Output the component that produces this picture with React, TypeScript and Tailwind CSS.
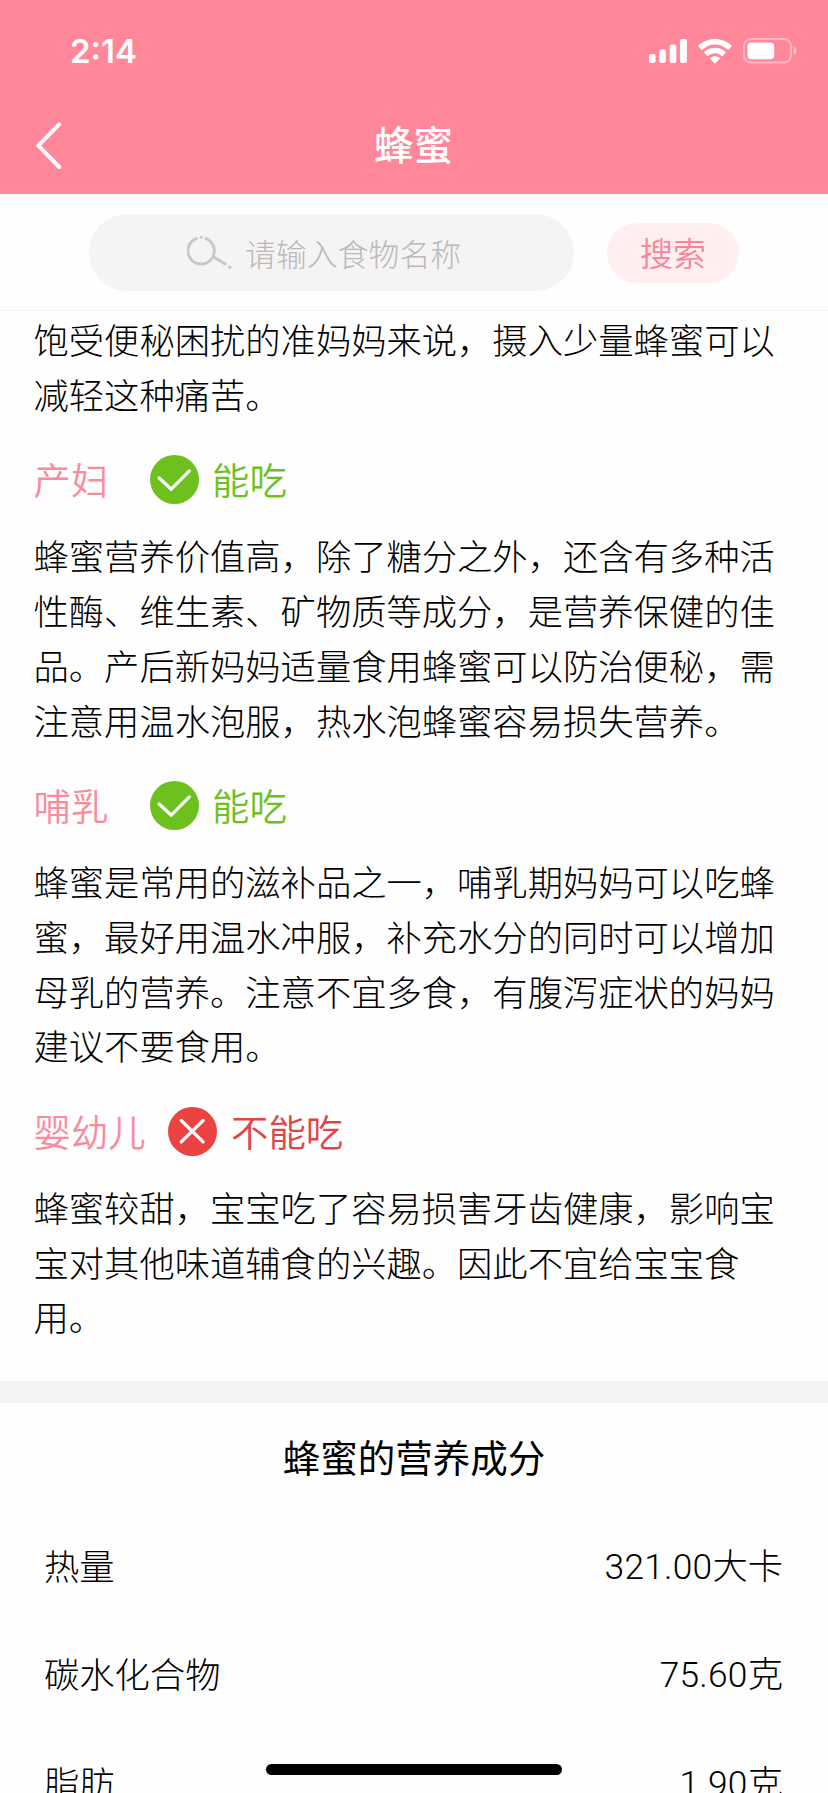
import * as React from "react";
import { cva, type VariantProps } from "class-variance-authority";
import { clsx } from "clsx";

// Status bar icons
const SignalIcon = () => (
  <svg viewBox="0 0 38 24" fill="currentColor" className="h-6 w-[38px]" aria-hidden="true">
    <rect x="0" y="15" width="6.6" height="9" rx="2" />
    <rect x="10.3" y="10.5" width="6.6" height="13.5" rx="2" />
    <rect x="20.7" y="5.5" width="6.6" height="18.5" rx="2" />
    <rect x="31" y="0" width="6.9" height="24" rx="2" />
  </svg>
);

const WifiIcon = () => (
  <svg viewBox="0 0 34 25" fill="currentColor" className="h-[25px] w-[34px]" aria-hidden="true">
    <path d="M17 0C23.3 0 29.2 2.4 33.3 6.3C33.8 6.8 33.8 7.3 33.4 7.8L30.8 10.4C30.4 10.8 29.9 10.8 29.4 10.4C26 7.3 21.7 5.4 17 5.4S8 7.3 4.6 10.4C4.1 10.8 3.6 10.8 3.2 10.4L.6 7.8C.2 7.3 .2 6.8 .7 6.3C4.8 2.4 10.7 0 17 0Z" />
    <path d="M17 8.7C21 8.7 24.7 10.2 27.5 12.7C28 13.1 28 13.7 27.5 14.1L24.9 16.7C24.5 17.1 24 17.1 23.5 16.7C21.7 15.1 19.4 14.2 17 14.2S12.3 15.1 10.5 16.7C10 17.1 9.5 17.1 9.1 16.7L6.5 14.1C6 13.7 6 13.1 6.5 12.7C9.3 10.2 13 8.7 17 8.7Z" />
    <path d="M17 17.2C18.7 17.2 20.3 17.8 21.5 18.8C22 19.2 22 19.7 21.6 20.1L17.7 24.1C17.2 24.5 16.8 24.5 16.3 24.1L12.4 20.1C12 19.7 12 19.2 12.5 18.8C13.7 17.8 15.3 17.2 17 17.2Z" />
  </svg>
);

const BatteryIcon = () => (
  <svg viewBox="0 0 54 26" fill="none" className="h-[26px] w-[54px]" aria-hidden="true">
    <rect x="1" y="1" width="47" height="23.6" rx="7" stroke="#fff" strokeOpacity=".4" strokeWidth="2" />
    <rect x="4.4" y="4.5" width="26.8" height="16.8" rx="4" fill="#fff" />
    <path d="M50.6 8.6C52.4 9.4 53.6 11 53.6 12.8S52.4 16.2 50.6 17Z" fill="#fff" fillOpacity=".45" />
  </svg>
);

const BackIcon = () => (
  <svg
    viewBox="0 0 26 48"
    fill="none"
    stroke="currentColor"
    strokeWidth="4"
    strokeLinecap="round"
    strokeLinejoin="round"
    className="ml-9 h-12 w-[26px]"
    aria-hidden="true"
  >
    <polyline points="23.2 2.4 2.4 23.6 23.2 45" />
  </svg>
);

const SearchIcon = () => (
  <svg
    viewBox="0 0 46 36"
    fill="none"
    stroke="#c8c8c8"
    strokeWidth="2.9"
    strokeLinecap="round"
    className="h-9 w-[46px]"
    aria-hidden="true"
  >
    <path d="M9.2 3.6A13.2 13.2 0 1 0 19 3.6" />
    <path d="M26.3 21.8L38.2 29" />
    <circle cx="14.1" cy="2.2" r="1.5" fill="#c8c8c8" stroke="none" />
    <circle cx="42.8" cy="32.2" r="1.7" fill="#c8c8c8" stroke="none" />
  </svg>
);

const CheckBadge = () => (
  <svg viewBox="0 0 48 48" fill="none" className="h-[49px] w-[49px]" aria-hidden="true">
    <circle cx="24" cy="24" r="24" fill="#6cc11e" />
    <polyline
      points="9 22.5 20.8 33.5 38.6 15.6"
      stroke="#fff"
      strokeWidth="3.2"
      strokeLinecap="round"
      strokeLinejoin="round"
    />
  </svg>
);

const CrossBadge = () => (
  <svg viewBox="0 0 48 48" fill="none" className="h-[49px] w-[49px]" aria-hidden="true">
    <circle cx="24" cy="24" r="24" fill="#eb4242" />
    <path d="M13 13.2L34.4 34.2M34.4 13.2L13 34.2" stroke="#fff" strokeWidth="3.2" strokeLinecap="round" />
  </svg>
);

const verdictVariants = cva("flex h-[106.6px] items-center pt-2.5 text-[37.4px] leading-[52px] font-[350]", {
  variants: {
    verdict: {
      yes: "text-[#6cc11e]",
      no: "text-[#e04444]",
    },
  },
  defaultVariants: {
    verdict: "yes",
  },
});

interface AdviceProps extends VariantProps<typeof verdictVariants> {
  group: string;
  children: string;
}

/** Eating advice for one group of people */
const Advice = ({ group, verdict = "yes", children }: AdviceProps) => (
  <section>
    <h2 className={verdictVariants({ verdict })}>
      <span className={clsx("pb-px text-[#fb8b9c]", verdict === "yes" ? "w-[116.5px]" : "w-[134.5px]")}>{group}</span>
      {verdict === "yes" ? <CheckBadge /> : <CrossBadge />}
      <span className={clsx("pb-px", verdict === "yes" ? "ml-[13px]" : "ml-3.5")}>
        {verdict === "yes" ? "能吃" : "不能吃"}
      </span>
    </h2>
    <p className="leading-[54.8px]">{children}</p>
  </section>
);

const nutrients = [
  { name: "热量", amount: "321.00", unit: "大卡" },
  { name: "碳水化合物", amount: "75.60", unit: "克" },
  { name: "脂肪", amount: "1.90", unit: "克" },
];

export default function App() {
  return (
    <div
      lang="zh-CN"
      className="relative flex h-[1793px] w-[828px] flex-col overflow-hidden bg-[#fefefe] font-['Noto_Sans_CJK_SC',sans-serif] text-[35.3px] font-light text-black"
    >
      <header className="h-[194px] shrink-0 bg-[#ff8799] text-white">
        <div className="flex h-[102px] items-center justify-between pr-[31px] pl-[70px]">
          <span className="pt-px font-['Inter',sans-serif] text-[33px] font-semibold">2:14</span>
          <div className="flex items-center gap-[11px]">
            <SignalIcon />
            <WifiIcon />
            <BatteryIcon />
          </div>
        </div>
        <div className="grid h-[88px] grid-cols-[1fr_auto_1fr] items-center">
          <BackIcon />
          <h1 className="pr-px pb-[7px] text-[39.5px] leading-none font-medium">蜂蜜</h1>
        </div>
      </header>

      <div className="flex h-[117px] shrink-0 items-center border-b border-[#f2f2f2] pt-px pl-[88.5px]">
        <div className="flex h-[77px] w-[485.5px] items-center rounded-full bg-[#f5f3f4] pl-[98.5px] text-[30.9px] text-[#b9b9bb]">
          <SearchIcon />
          <span className="ml-3 pt-0.5">请输入食物名称</span>
        </div>
        <button className="ml-[33px] h-[60px] w-[132px] rounded-full bg-[#ffeff0] text-[33px] font-[350] text-[#fb8496]">
          搜索
        </button>
      </div>

      <main className="h-[1070px] shrink-0 pt-px pr-[50.5px] pl-[33.5px]">
        <p className="leading-[54.8px]">饱受便秘困扰的准妈妈来说，摄入少量蜂蜜可以减轻这种痛苦。</p>
        <Advice group="产妇">
          蜂蜜营养价值高，除了糖分之外，还含有多种活性酶、维生素、矿物质等成分，是营养保健的佳品。产后新妈妈适量食用蜂蜜可以防治便秘，需注意用温水泡服，热水泡蜂蜜容易损失营养。
        </Advice>
        <Advice group="哺乳">
          蜂蜜是常用的滋补品之一，哺乳期妈妈可以吃蜂蜜，最好用温水冲服，补充水分的同时可以增加母乳的营养。注意不宜多食，有腹泻症状的妈妈建议不要食用。
        </Advice>
        <Advice group="婴幼儿" verdict="no">
          蜂蜜较甜，宝宝吃了容易损害牙齿健康，影响宝宝对其他味道辅食的兴趣。因此不宜给宝宝食用。
        </Advice>
      </main>

      <section className="shrink-0 border-t-[22px] border-[#f5f3f4]">
        <h2 className="flex h-[108px] items-center justify-center pb-px text-[37.5px] font-normal">
          蜂蜜的营养成分
        </h2>
        <ul className="pr-[45px] pl-[44px]">
          {nutrients.map(({ name, amount, unit }) => (
            <li key={name} className="flex h-[108.5px] items-center justify-between">
              <span>{name}</span>
              <span className="pt-px">
                <span className="font-['Roboto',sans-serif] tracking-[0.25px]">{amount}</span>
                {unit}
              </span>
            </li>
          ))}
        </ul>
      </section>

      {/* Home indicator */}
      <div className="absolute top-[1764px] left-[266px] h-[11px] w-[296px] rounded-full bg-black" />
    </div>
  );
}
